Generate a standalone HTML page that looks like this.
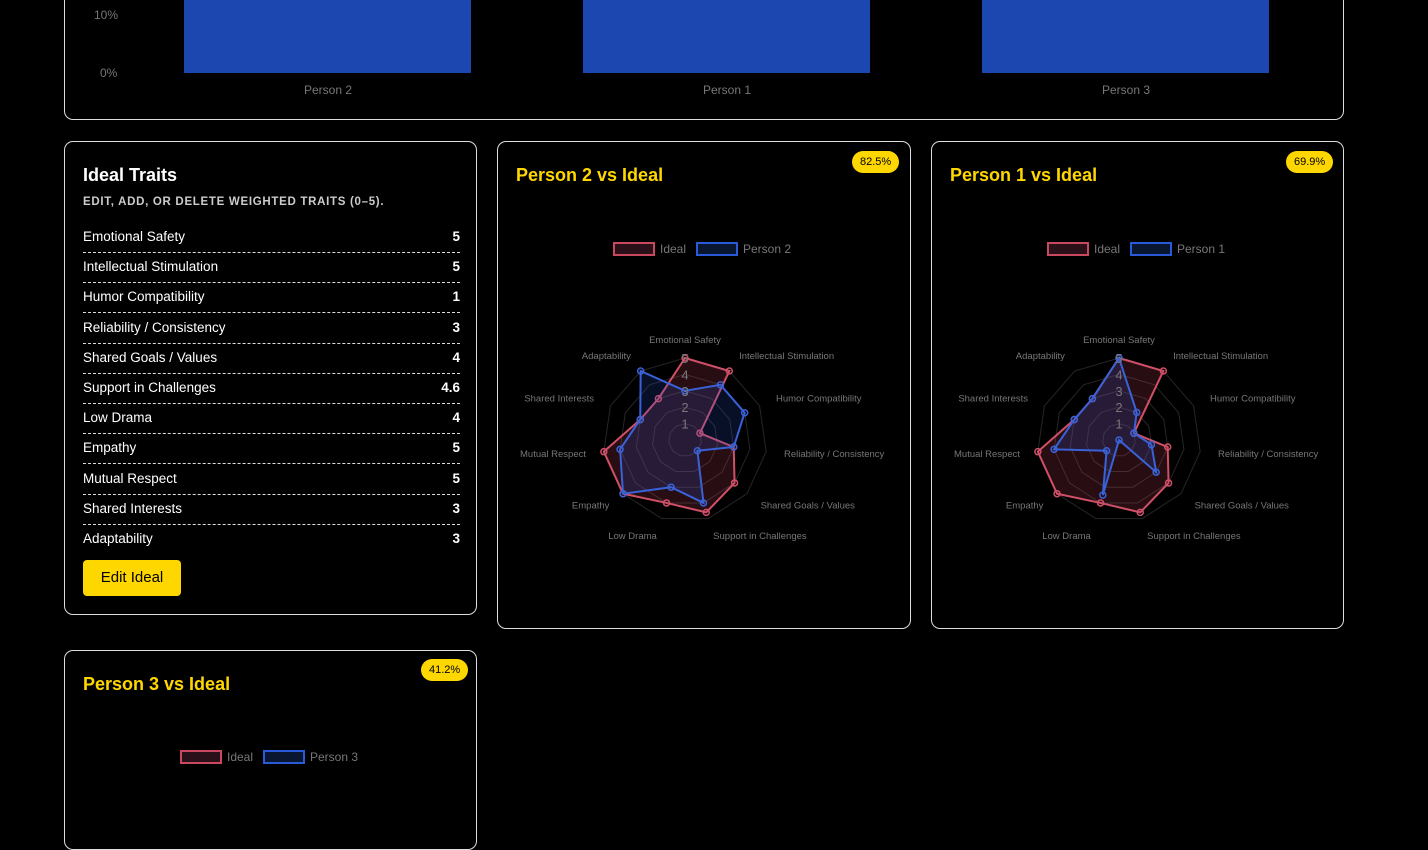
<!DOCTYPE html>
<html><head><meta charset="utf-8">
<style>
html,body{margin:0;padding:0;background:#000;width:1428px;height:790px;overflow:hidden;font-family:"Liberation Sans",sans-serif;color:#fff}
.card{position:absolute;border:1px solid #ddd;border-radius:9px;background:#000;box-sizing:border-box}
.title{position:absolute;left:18px;top:23px;font-size:18px;font-weight:bold;color:#FFD700}
.badge{position:absolute;background:#FFD700;color:#000;font-size:11px;border-radius:11px;height:22px;line-height:22px;padding:0 8px}
.row{position:absolute;left:18px;width:377px;height:30px;font-size:13.5px;border-bottom:1px dashed #ddd;box-sizing:border-box}
.row span{position:absolute;top:6px}
.row b{position:absolute;right:0;top:6px}
.ax{font-size:9.5px;fill:#777;font-family:"Liberation Sans",sans-serif}
</style></head><body>
<div class="card" style="left:64px;top:-20px;width:1280px;height:140px;">
  <div style="position:absolute;left:29px;top:27px;font-size:12px;color:#777">10%</div>
  <div style="position:absolute;left:35px;top:85px;font-size:12px;color:#777">0%</div>
  <div style="position:absolute;left:119px;top:0;width:287px;height:92px;background:#1d47b0"></div>
  <div style="position:absolute;left:518px;top:0;width:287px;height:92px;background:#1d47b0"></div>
  <div style="position:absolute;left:917px;top:0;width:287px;height:92px;background:#1d47b0"></div>
  <div style="position:absolute;left:239px;top:102px;font-size:12px;color:#777">Person 2</div>
  <div style="position:absolute;left:638px;top:102px;font-size:12px;color:#777">Person 1</div>
  <div style="position:absolute;left:1037px;top:102px;font-size:12px;color:#777">Person 3</div>
</div>

<div class="card" style="left:64px;top:141px;width:413px;height:474px;">
  <div class="title" style="color:#fff">Ideal Traits</div>
  <div style="position:absolute;left:18px;top:54px;font-size:11.5px;font-weight:bold;letter-spacing:0.7px;color:#ccc">EDIT, ADD, OR DELETE WEIGHTED TRAITS (0–5).</div>
  <div id="rows"></div>
  <div style="position:absolute;left:18px;top:418px;width:98px;height:36px;background:#FFD700;border-radius:4px;color:#000;font-size:15px;line-height:36px;text-align:center">Edit Ideal</div>
</div>

<div class="card" style="left:497px;top:141px;width:414px;height:488px;">
  <div class="title">Person 2 vs Ideal</div>
  <div class="badge" style="left:354px;top:9px">82.5%</div>
  <svg id="r1" width="412" height="486" style="position:absolute;left:0;top:0"></svg>
</div>
<div class="card" style="left:931px;top:141px;width:413px;height:488px;">
  <div class="title">Person 1 vs Ideal</div>
  <div class="badge" style="left:354px;top:9px">69.9%</div>
  <svg id="r2" width="412" height="486" style="position:absolute;left:0;top:0"></svg>
</div>
<div class="card" style="left:64px;top:650px;width:413px;height:200px;">
  <div class="title">Person 3 vs Ideal</div>
  <div class="badge" style="left:356px;top:8px">41.2%</div>
  <svg id="r3" width="412" height="140" style="position:absolute;left:0;top:0"></svg>
</div>
<script>
var names=["Emotional Safety","Intellectual Stimulation","Humor Compatibility","Reliability / Consistency","Shared Goals / Values","Support in Challenges","Low Drama","Empathy","Mutual Respect","Shared Interests","Adaptability"];
var ideal=[5,5,1,3,4,4.6,4,5,5,3,3];
var h='';
for(var i=0;i<11;i++){h+='<div class="row" style="top:'+(81+i*30.2)+'px'+(i==10?';border:none':'')+'"><span>'+names[i]+'</span><b>'+ideal[i]+'</b></div>';}
document.getElementById('rows').innerHTML=h;
function legend(id,cx,name,y){
 var s='<rect x="'+(cx-71)+'" y="'+(y-6)+'" width="40" height="12" fill="#2a1018" stroke="#c84860" stroke-width="2"/>'+
 '<text x="'+(cx-25)+'" y="'+(y+4)+'" font-size="12" fill="#777" font-family="Liberation Sans">Ideal</text>'+
 '<rect x="'+(cx+12)+'" y="'+(y-6)+'" width="40" height="12" fill="#0a1530" stroke="#2a5ad8" stroke-width="2"/>'+
 '<text x="'+(cx+58)+'" y="'+(y+4)+'" font-size="12" fill="#777" font-family="Liberation Sans">'+name+'</text>';
 return s;}
function radar(id,vals,name){
 var cx=187,cy=298,u=16.4,s='';
 function pt(i,v){var a=(-90+i*360/11)*Math.PI/180;return [cx+Math.cos(a)*v*u,cy+Math.sin(a)*v*u];}
 for(var r=1;r<=5;r++){var p=[];for(var i=0;i<11;i++)p.push(pt(i,r).join(','));s+='<polygon points="'+p.join(' ')+'" fill="none" stroke="#262626"/>';}
 function poly(v,f,c){var p=[];for(var i=0;i<11;i++)p.push(pt(i,v[i]).join(','));var o='<polygon points="'+p.join(' ')+'" fill="'+f+'" stroke="'+c+'" stroke-width="2"/>';for(var i=0;i<11;i++){var q=pt(i,v[i]);o+='<circle cx="'+q[0]+'" cy="'+q[1]+'" r="3" fill="none" stroke="'+c+'" stroke-width="1.5"/>';}return o;}
 s+=poly(ideal,'rgba(200,72,96,0.2)','#d05068');
 s+=poly(vals,'rgba(40,80,200,0.2)','#3a62d8');
 for(var r=1;r<=5;r++)s+='<text x="'+cx+'" y="'+(cy-r*u+5)+'" text-anchor="middle" font-size="13" fill="#777" font-family="Liberation Sans">'+r+'</text>';
 for(var i=0;i<11;i++){var a=(-90+i*360/11)*Math.PI/180;var x=cx+Math.cos(a)*100,y=cy+Math.sin(a)*100+3;var c=Math.cos(a);var an=Math.abs(c)<0.2?'middle':(c>0?'start':'end');
  if(i==0)y=cy-97;
  s+='<text class="ax" x="'+x+'" y="'+y+'" text-anchor="'+an+'">'+names[i]+'</text>';}
 s+=legend(id,187,name,107);
 document.getElementById(id).innerHTML=s;}
radar('r1',[3,4,4,3,1,4,3,5,4,3,5],'Person 2');
radar('r2',[5,2,1,2,3,0,3.5,1,4,3,3],'Person 1');
document.getElementById('r3').innerHTML=legend('r3',187,'Person 3',106);
</script>
</body></html>
